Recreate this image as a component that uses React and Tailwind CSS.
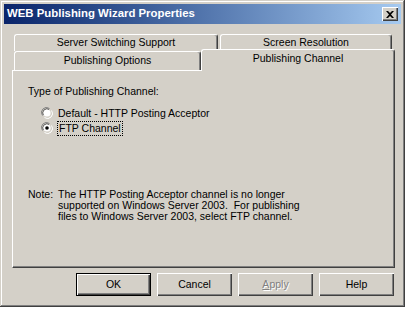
import { useState } from 'react';

const FONT = { fontFamily: '"Liberation Sans", Arial, sans-serif' };

function Radio({ checked }) {
  return (
    <svg width="12" height="12" viewBox="0 0 12 12" className="shrink-0">
      <path d="M1.5 8.5 A5 5 0 0 1 8.5 1.5" fill="none" stroke="#808080" />
      <path d="M2.5 8 A4 4 0 0 1 8 2.5" fill="none" stroke="#404040" />
      <path d="M3.5 10.5 A5 5 0 0 0 10.5 3.5" fill="none" stroke="#ffffff" />
      <path d="M4 9.5 A4 4 0 0 0 9.5 4" fill="none" stroke="#d4d0c8" />
      <circle cx="6" cy="6" r="3.6" fill="#ffffff" />
      {checked && <circle cx="6" cy="6" r="1.8" fill="#000000" />}
    </svg>
  );
}

function Tab({ label, className = '', selected = false }) {
  return (
    <div
      className={`flex items-center justify-center bg-[#d4d0c8] border-t border-l border-white border-r border-r-[#404040] rounded-t-[3px] shadow-[inset_-1px_0_#808080] text-[10.5px] text-black ${
        selected ? 'relative z-10 h-[22px] -mb-px pb-[3px]' : 'h-full'
      } ${className}`}
    >
      {label}
    </div>
  );
}

function Button({ children, isDefault, disabled }) {
  return (
    <div
      className={`w-[75px] h-[23px] flex items-center justify-center bg-[#d4d0c8] text-[10.5px] ${
        isDefault
          ? 'border border-black shadow-[inset_1px_1px_#ffffff,inset_-1px_-1px_#404040,inset_-2px_-2px_#808080]'
          : 'shadow-[inset_1px_1px_#ffffff,inset_-1px_-1px_#404040,inset_-2px_-2px_#808080]'
      } ${disabled ? 'text-[#808080] [text-shadow:1px_1px_0_#ffffff]' : 'text-black'}`}
    >
      {children}
    </div>
  );
}

export default function App() {
  const [channel, setChannel] = useState('ftp');

  return (
    <div className="w-[407px] h-[311px] bg-white" style={FONT}>
      {/* Window frame */}
      <div className="w-[405px] h-[307px] bg-[#d4d0c8] p-[4px] flex flex-col shadow-[inset_-1px_-1px_#404040,inset_1px_1px_#d4d0c8,inset_-2px_-2px_#808080,inset_2px_2px_#ffffff]">
        {/* Title bar */}
        <div className="h-[20px] flex items-center justify-between pl-[3px] pr-[3px] bg-gradient-to-r from-[#0a246a] to-[#a6caf0]">
          <span className="text-white font-bold text-[11.4px] leading-none">WEB Publishing Wizard Properties</span>
          <div className="w-[16px] h-[14px] flex items-center justify-center bg-[#d4d0c8] shadow-[inset_1px_1px_#ffffff,inset_-1px_-1px_#404040,inset_-2px_-2px_#808080]">
            <svg width="8" height="7" viewBox="0 0 8 7">
              <path d="M0 0 L2 0 L4 2 L6 0 L8 0 L5 3.5 L8 7 L6 7 L4 5 L2 7 L0 7 L3 3.5 Z" fill="#000" />
            </svg>
          </div>
        </div>

        {/* Tabs */}
        <div className="mt-[10px] pl-[8px] pr-[6px] flex flex-col">
          <div className="h-[17px] flex gap-[2px] pl-[2px]">
            <Tab label="Server Switching Support" className="w-[204px]" />
            <Tab label="Screen Resolution" className="w-[172px]" />
          </div>
          <div className="h-[19px] flex items-end pl-[2px]">
            <Tab label="Publishing Options" className="w-[187px]" />
            <Tab label="Publishing Channel" className="w-[194px]" selected />
          </div>

          {/* Panel */}
          <div className="h-[198px] border-t border-l border-white border-r border-b border-r-[#404040] border-b-[#404040] shadow-[inset_-1px_-1px_#808080] pl-[15px] pt-[15px] flex flex-col text-[10.5px] text-black leading-[11px]">
            <div>Type of Publishing Channel:</div>
            <div className="mt-[10px] pl-[13px] flex flex-col gap-[3px]">
              <label className="h-[12px] flex items-center gap-[5px]" onClick={() => setChannel('http')}>
                <Radio checked={channel === 'http'} />
                <span>Default - HTTP Posting Acceptor</span>
              </label>
              <label className="h-[12px] flex items-center gap-[4px]" onClick={() => setChannel('ftp')}>
                <Radio checked={channel === 'ftp'} />
                <span className="px-px py-[1px] border border-dotted border-black leading-[11px]">FTP Channel</span>
              </label>
            </div>
            <div className="mt-[55px] flex">
              <div className="w-[30px]">Note:</div>
              <div className="leading-[11.2px]">
                The HTTP Posting Acceptor channel is no longer
                <br />
                supported on Windows Server 2003.&nbsp; For publishing
                <br />
                files to Windows Server 2003, select FTP channel.
              </div>
            </div>
          </div>
        </div>

        {/* Buttons */}
        <div className="mt-[5px] pr-[7px] flex justify-end gap-[6px]">
          <Button isDefault>OK</Button>
          <Button>Cancel</Button>
          <Button disabled>
            <span><u>A</u>pply</span>
          </Button>
          <Button>Help</Button>
        </div>
      </div>
    </div>
  );
}
